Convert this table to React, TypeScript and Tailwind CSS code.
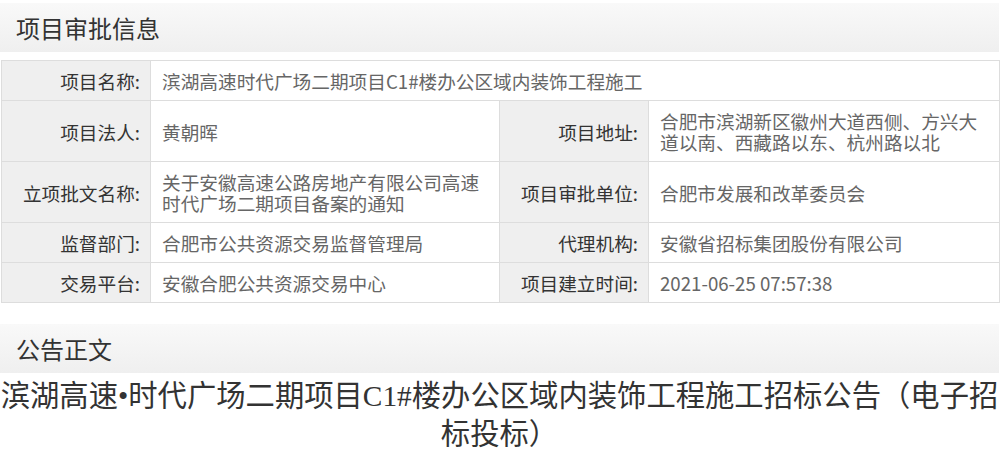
const sans = { fontFamily: '"Noto Sans CJK SC", "Liberation Sans", sans-serif' };

type Row = { label: string; value: string; label2?: string; value2?: string };

const rows: Row[] = [
  { label: '项目名称:', value: '滨湖高速时代广场二期项目C1#楼办公区域内装饰工程施工' },
  {
    label: '项目法人:',
    value: '黄朝晖',
    label2: '项目地址:',
    value2: '合肥市滨湖新区徽州大道西侧、方兴大道以南、西藏路以东、杭州路以北',
  },
  {
    label: '立项批文名称:',
    value: '关于安徽高速公路房地产有限公司高速时代广场二期项目备案的通知',
    label2: '项目审批单位:',
    value2: '合肥市发展和改革委员会',
  },
  {
    label: '监督部门:',
    value: '合肥市公共资源交易监督管理局',
    label2: '代理机构:',
    value2: '安徽省招标集团股份有限公司',
  },
  {
    label: '交易平台:',
    value: '安徽合肥公共资源交易中心',
    label2: '项目建立时间:',
    value2: '2021-06-25 07:57:38',
  },
];

function SectionHeader({ title }: { title: string }) {
  return (
    <div className="flex h-[49px] items-center bg-gradient-to-b from-[#f9f9f9] to-[#efefef] pl-4">
      <h3 className="text-[24px] leading-none font-normal text-[#333]">{title}</h3>
    </div>
  );
}

const labelCls =
  'border border-[#dddddd] bg-[#efefef] py-[9px] pr-[10px] text-right align-middle text-[18.67px] leading-[21px] text-[#333] whitespace-nowrap';
const valueCls =
  'border border-[#dddddd] bg-white py-[9px] px-[11px] text-left align-middle text-[18.67px] leading-[21px] text-[#666]';

export default function App() {
  return (
    <div className="w-[999px] bg-white pt-[3px]" style={sans}>
      <SectionHeader title="项目审批信息" />

      <table className="mt-2 ml-px w-[998px] table-fixed border-collapse">
        <colgroup>
          <col className="w-[149px]" />
          <col className="w-[349px]" />
          <col className="w-[149px]" />
          <col className="w-[351px]" />
        </colgroup>
        <tbody>
          {rows.map((r) => (
            <tr key={r.label}>
              <td className={labelCls}>{r.label}</td>
              {r.label2 ? (
                <>
                  <td className={valueCls}>{r.value}</td>
                  <td className={labelCls}>{r.label2}</td>
                  <td className={valueCls}>{r.value2}</td>
                </>
              ) : (
                <td className={valueCls} colSpan={3}>
                  {r.value}
                </td>
              )}
            </tr>
          ))}
        </tbody>
      </table>

      <div className="mt-[21px]">
        <SectionHeader title="公告正文" />
      </div>

      <p
        className="mt-[4px] text-center text-[29.33px] leading-[38px] text-[#333]"
        style={{ fontFamily: '"Liberation Serif", "Noto Sans CJK SC", serif' }}
      >
        滨湖高速•时代广场二期项目C1#楼办公区域内装饰工程施工招标公告（电子招标投标）
      </p>
    </div>
  );
}
